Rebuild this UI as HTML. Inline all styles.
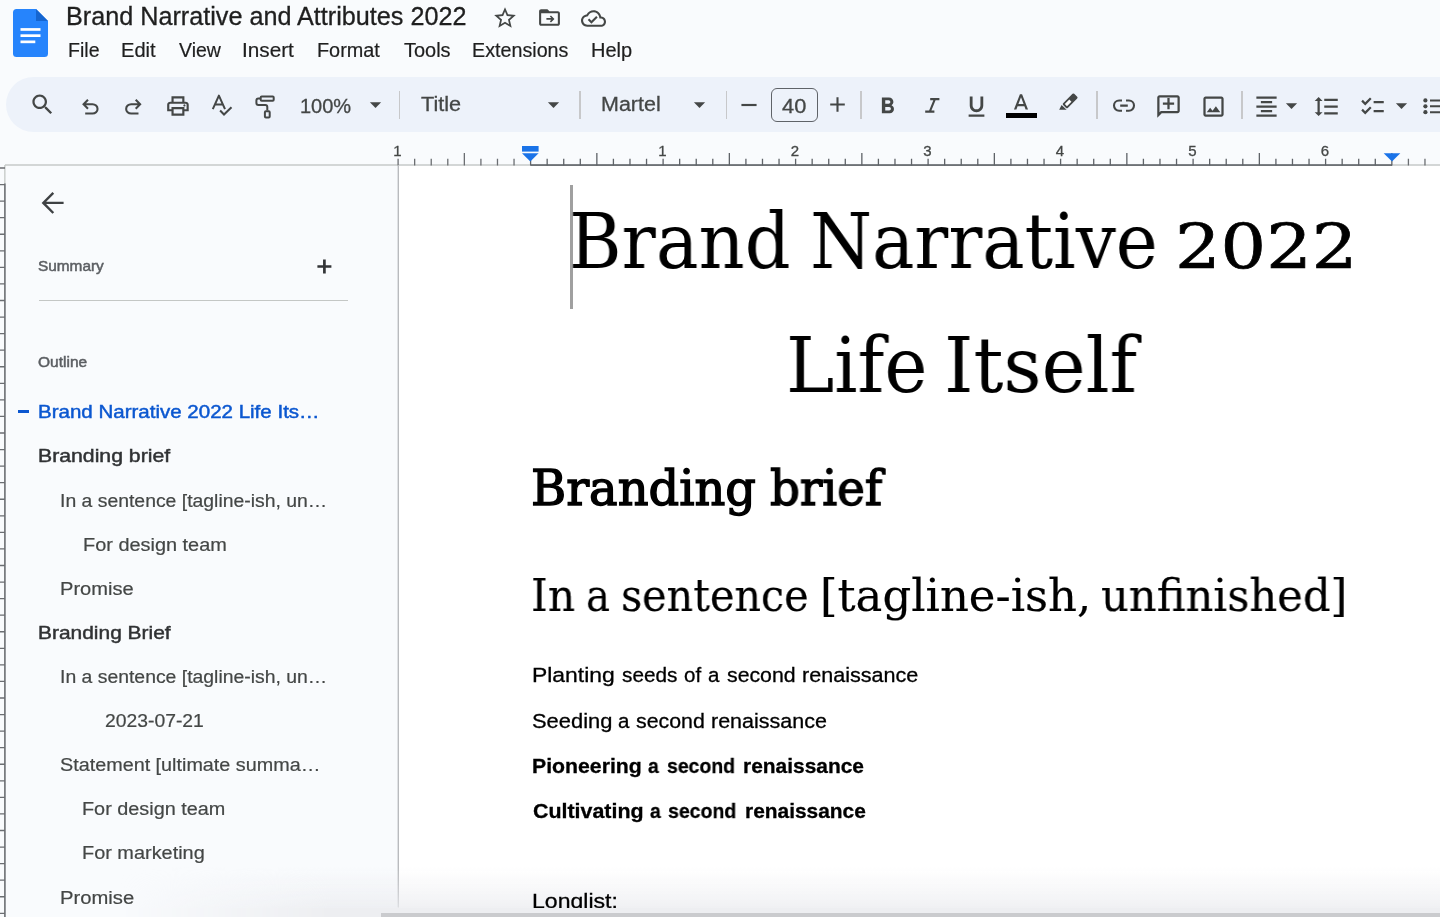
<!DOCTYPE html>
<html lang="en">
<head>
<meta charset="utf-8">
<title>Brand Narrative and Attributes 2022</title>
<style>
*{box-sizing:border-box;margin:0;padding:0}
html,body{width:1440px;height:917px;overflow:hidden;background:#f9fbfd}
body{position:relative;font-family:"Liberation Sans",sans-serif;color:#1f1f1f}
.abs{position:absolute}
.t{position:absolute;white-space:nowrap;line-height:1;transform-origin:0 100%;will-change:transform}
svg{position:absolute;overflow:visible}
.ic{fill:#444746}
/* header */
#doctitle{-webkit-text-stroke:.3px #1f1f1f;font-size:25px;color:#1f1f1f}
.menu{font-size:19.5px;color:#1f1f1f;-webkit-text-stroke:.2px #1f1f1f}
/* toolbar */
#toolbar{left:5.500px;top:76.800px;width:1500px;height:55.500px;border-radius:28px;background:#edf2fa}
.sep{position:absolute;top:91.200px;width:1.600px;height:27.400px;background:#c7c8ca}
.tb{font-size:20px;color:#444746;-webkit-text-stroke:.3px #444746}
/* sidebar */
.ol{font-size:18.3px;color:#444746;-webkit-text-stroke:.2px #444746}
.olb{font-size:17.8px;color:#303234;-webkit-text-stroke:.45px currentColor}
/* doc */
#page{left:399px;top:166px;width:1041px;height:751px;background:#fff}
.serif{font-family:"DejaVu Serif","Liberation Serif",serif;color:#000}
.tt{font-size:76px}
.h1{font-size:47.65px;-webkit-text-stroke:1.4px #000}
.h2{font-size:44px;-webkit-text-stroke:.2px #000}
.bb{font-weight:bold}
.body{font-size:20.5px;color:#000;-webkit-text-stroke:.3px #000}
</style>
</head>
<body>
<!-- HEADER -->
<svg class="abs" style="left:13px;top:9px" width="35" height="48" viewBox="0 0 35 48">
  <path d="M3.5 0H23L35 12V44.5Q35 48 31.500 48H3.500Q0 48 0 44.500V3.500Q0 0 3.500 0Z" fill="#2684fc"/>
  <path d="M23 0L35 12H23Z" fill="#1565d0"/>
  <rect x="7.500" y="19.100" width="20" height="2.700" fill="#fff"/>
  <rect x="7.500" y="25.300" width="20" height="2.700" fill="#fff"/>
  <rect x="7.500" y="31.500" width="14.800" height="2.700" fill="#fff"/>
</svg>
<div class="t" id="doctitle" style="left:66.0px;top:4.0px;transform:scaleX(1.0076)">Brand Narrative and Attributes 2022</div>
<div class="t menu" id="m1" style="left:68.0px;top:41.0px;transform:scaleX(1.0027)">File</div>
<div class="t menu" id="m2" style="left:121.0px;top:41.0px;transform:scaleX(1.0303)">Edit</div>
<div class="t menu" id="m3" style="left:179.0px;top:41.0px;transform:scaleX(1.0000)">View</div>
<div class="t menu" id="m4" style="left:242.0px;top:41.0px;transform:scaleX(1.0639)">Insert</div>
<div class="t menu" id="m5" style="left:317.0px;top:41.0px;transform:scaleX(1.0173)">Format</div>
<div class="t menu" id="m6" style="left:404.0px;top:41.0px;transform:scaleX(1.0231)">Tools</div>
<div class="t menu" id="m7" style="left:472.0px;top:41.0px;transform:scaleX(1.0107)">Extensions</div>
<div class="t menu" id="m8" style="left:591.0px;top:41.0px;transform:scaleX(1.0256)">Help</div>

<!-- HEADER ICONS -->
<svg class="ic" style="left:492.400px;top:4.600px" width="26" height="26" viewBox="0 0 24 24"><path d="M22 9.240l-7.190-.620L12 2 9.190 8.630 2 9.240l5.460 4.730L5.820 21 12 17.270 18.180 21l-1.630-7.030L22 9.240zM12 15.400l-3.760 2.270 1-4.280-3.320-2.880 4.380-.380L12 6.100l1.710 4.040 4.380.380-3.320 2.880 1 4.280L12 15.400z"/></svg>
<svg class="ic" style="left:537px;top:5.400px" width="25" height="25" viewBox="0 0 24 24"><path d="M20 6h-8l-2-2H4c-1.100 0-2 .900-2 2v12c0 1.100.900 2 2 2h16c1.100 0 2-.900 2-2V8c0-1.100-.900-2-2-2zm0 12H4V8h16v10z"/><path d="M13.200 17l-1.300-1.300 1.700-1.700H8v-2h5.600l-1.700-1.700L13.200 9l4 4z" transform="translate(12.9,13.4) scale(.84) translate(-12.6,-13)"/></svg>
<svg class="ic" style="left:581px;top:5.500px" width="25" height="25" viewBox="0 0 24 24"><path d="M19.350 10.040C18.670 6.590 15.640 4 12 4 9.110 4 6.600 5.640 5.350 8.040 2.340 8.360 0 10.910 0 14c0 3.310 2.690 6 6 6h13c2.760 0 5-2.240 5-5 0-2.640-2.050-4.780-4.650-4.960zM19 18H6c-2.210 0-4-1.790-4-4 0-2.050 1.530-3.760 3.560-3.970l1.070-.110.500-.950C8.080 7.140 9.940 6 12 6c2.620 0 4.880 1.860 5.390 4.430l.300 1.500 1.530.110c1.560.100 2.780 1.410 2.780 2.960 0 1.650-1.350 3-3 3zm-9-3.820l-2.090-2.090L6.500 13.500 10 17l6.010-6.010-1.410-1.410z"/></svg>
<!-- TOOLBAR -->
<div class="abs" id="toolbar"></div>
<div class="sep" style="left:398.700px"></div>
<div class="sep" style="left:579.200px"></div>
<div class="sep" style="left:725.700px"></div>
<div class="sep" style="left:860.200px"></div>
<div class="sep" style="left:1096.100px"></div>
<div class="sep" style="left:1241.200px"></div>
<!-- search -->
<svg class="ic" style="left:28.800px;top:90.900px" width="27" height="27" viewBox="0 0 24 24"><path d="M15.500 14h-.790l-.280-.270C15.410 12.590 16 11.110 16 9.500 16 5.910 13.090 3 9.500 3S3 5.910 3 9.500 5.910 16 9.500 16c1.610 0 3.090-.590 4.230-1.570l.270.280v.790l5 4.990L20.490 19l-4.990-5zm-6 0C7.010 14 5 11.990 5 9.500S7.010 5 9.500 5 14 7.010 14 9.500 11.990 14 9.500 14z"/></svg>
<!-- undo -->
<svg class="ic" style="left:77.800px;top:94.700px" width="24.700" height="24.700" viewBox="0 0 24 24"><path d="M7 19v-2h7.100q1.575 0 2.737-1Q18 15 18 13.500T16.837 11Q15.675 10 14.100 10H7.800l2.600 2.600L9 14 4 9l5-5 1.400 1.400L7.800 8h6.300q2.425 0 4.163 1.575Q20 11.150 20 13.500q0 2.350-1.737 3.925Q16.525 19 14.100 19Z"/></svg>
<!-- redo -->
<svg class="ic" style="left:120.900px;top:94.700px" width="24.700" height="24.700" viewBox="0 0 24 24"><path d="M9.900 19q-2.425 0-4.163-1.575Q4 15.850 4 13.500q0-2.350 1.737-3.925Q7.475 8 9.900 8h6.300l-2.600-2.600L15 4l5 5-5 5-1.400-1.400 2.600-2.600H9.900q-1.575 0-2.737 1Q6 12 6 13.500T7.163 16q1.162 1 2.737 1H17v2Z"/></svg>
<!-- print -->
<svg class="ic" style="left:165.100px;top:93.400px" width="25.900" height="25.900" viewBox="0 0 24 24"><path d="M16 8V5H8v3H6V3h12v5ZM4 10h16H6Zm14 2.500q.425 0 .713-.288Q19 11.925 19 11.500t-.287-.713Q18.425 10.500 18 10.500t-.712.287Q17 11.075 17 11.500t.288.712q.287.288.712.288ZM16 19v-4H8v4Zm2 2H6v-4H2v-6q0-1.275.875-2.138Q3.750 8 5 8h14q1.275 0 2.137.862Q22 9.725 22 11v6h-4Zm2-6v-4q0-.425-.288-.713Q19.425 10 19 10H5q-.425 0-.713.287Q4 10.575 4 11v4h2v-2h12v2Z"/></svg>
<!-- spellcheck -->
<!-- paint roller -->
<svg style="left:0;top:0" width="1440" height="140" viewBox="0 0 1440 140" fill="none" stroke="#444746" stroke-width="2" stroke-linejoin="miter">
<!-- spellcheck A + check -->
<path d="M212.800 109.200L218.900 95.600L225 109.200M214.900 104.400H222.900" stroke-linejoin="round"/>
<path d="M220.100 110.500L224 114.500L231.500 107.200"/>
<!-- paint roller -->
<rect x="260.700" y="96.500" width="13" height="4.200" rx="1"/>
<path d="M260 98.600H258.400Q256.400 98.600 256.400 100.600V103Q256.400 105 258.400 105H265.300Q267.300 105 267.300 107V110.500"/>
<rect x="264.900" y="111.200" width="4.800" height="6.400" rx="1"/>
<!-- italic, highlighter, link -->
<path d="M930.200 99.100H939.400M925.200 111.600H934.400M934.900 99.100L929.800 111.600" stroke-width="2.100"/>
<g transform="translate(1070.150,100.850) rotate(45)">
<rect x="-3.300" y="-7.850" width="6.600" height="15.700" rx="1.200" fill="#444746" stroke="none"/>
<rect x="-1.500" y="-.300" width="3" height="6.300" fill="#fff" stroke="none"/>
</g>
<path d="M1061.600 105L1066.600 109.700H1059.200Z" fill="#444746" stroke="none"/>
<path d="M1122 100.500H1119.100A5.100 5.100 0 0 0 1119.100 110.700H1122M1126 100.500H1128.900A5.100 5.100 0 0 1 1128.900 110.700H1126M1120.200 105.600H1127.800" stroke-width="2.100"/>
<!-- bullets -->
<path d="M1430 100.400H1446M1430 106.300H1446M1430 112.200H1446"/>
<circle cx="1425.400" cy="100.400" r="2.100" fill="#444746" stroke="none"/><circle cx="1425.400" cy="106.300" r="2.100" fill="#444746" stroke="none"/><circle cx="1425.400" cy="112.200" r="2.100" fill="#444746" stroke="none"/>
</svg>
<div class="t tb" id="zoom" style="left:300.0px;top:96.0px;transform:scaleX(1.0000)">100%</div>
<svg class="ic" style="left:362px;top:90.800px" width="27" height="27" viewBox="0 0 24 24"><path d="M7 10l5 5 5-5z"/></svg>
<div class="t tb" id="tstyle" style="left:421.0px;top:94.0px;transform:scaleX(1.0818)">Title</div>
<svg class="ic" style="left:540px;top:90.800px" width="27" height="27" viewBox="0 0 24 24"><path d="M7 10l5 5 5-5z"/></svg>
<div class="t tb" id="tfont" style="left:601.0px;top:94.0px;transform:scaleX(1.0741)">Martel</div>
<svg class="ic" style="left:686px;top:90.800px" width="27" height="27" viewBox="0 0 24 24"><path d="M7 10l5 5 5-5z"/></svg>
<!-- minus / size / plus -->
<svg class="ic" style="left:736px;top:92px" width="26" height="26" viewBox="0 0 24 24"><path d="M19 13H5v-2h14v2z"/></svg>
<div class="abs" style="left:770.500px;top:88px;width:47px;height:33.500px;border:1.400px solid #5f6368;border-radius:6px"></div>
<div class="t tb" id="tsize" style="left:782.0px;top:96.0px;transform:scaleX(1.0909)">40</div>
<svg class="ic" style="left:824.700px;top:92.300px" width="25" height="25" viewBox="0 0 24 24"><path d="M19 13h-6v6h-2v-6H5v-2h6V5h2v6h6v2z"/></svg>
<!-- B I U A pen -->
<svg class="ic" style="left:873.500px;top:92.800px" width="27" height="27" viewBox="0 0 24 24"><path d="M15.600 10.790c.970-.670 1.650-1.770 1.650-2.790 0-2.260-1.750-4-4-4H7v14h7.040c2.090 0 3.710-1.700 3.710-3.790 0-1.520-.860-2.820-2.150-3.420zM10 6.500h3c.830 0 1.500.670 1.500 1.500s-.670 1.500-1.500 1.500h-3v-3zm3.500 9H10v-3h3.500c.830 0 1.500.670 1.500 1.500s-.670 1.500-1.500 1.500z"/></svg>
<svg class="ic" style="left:962.500px;top:92.500px" width="27" height="27" viewBox="0 0 24 24"><path d="M12 17c3.310 0 6-2.690 6-6V3h-2.500v8c0 1.930-1.570 3.500-3.500 3.500S8.500 12.930 8.500 11V3H6v8c0 3.310 2.690 6 6 6zm-7 2v2h14v-2H5z"/></svg>
<svg class="ic" style="left:1008px;top:91px" width="26" height="26" viewBox="0 0 24 24"><path d="M11 3L5.500 17h2.250l1.120-3h6.250l1.120 3h2.250L13 3h-2zm-1.380 9L12 5.670 14.380 12H9.620z"/></svg>
<div class="abs" style="left:1006px;top:113px;width:31px;height:5px;background:#000"></div>
<!-- highlighter -->
<!-- link -->
<!-- add comment (tail left) -->
<svg class="ic" style="left:1154.500px;top:92.500px" width="27" height="27" viewBox="0 0 24 24"><g transform="translate(24,0) scale(-1,1)"><path d="M22 4c0-1.100-.900-2-2-2H4c-1.100 0-2 .900-2 2v12c0 1.100.900 2 2 2h14l4 4V4zm-2 13.170L18.830 16H4V4h16v13.170z"/></g><path d="M13 5h-2v4H7v2h4v4h2v-4h4V9h-4z" transform="translate(0,-.500)"/></svg>
<!-- image -->
<svg class="ic" style="left:1199.500px;top:92.500px" width="27" height="27" viewBox="0 0 24 24"><path d="M19 5v14H5V5h14m0-2H5c-1.100 0-2 .900-2 2v14c0 1.100.900 2 2 2h14c1.100 0 2-.900 2-2V5c0-1.100-.900-2-2-2zm-4.860 8.860l-3 3.870L9 13.140 6 17h12l-3.860-5.140z"/></svg>
<!-- align center -->
<svg class="ic" style="left:1252.500px;top:92.500px" width="27" height="27" viewBox="0 0 24 24"><path d="M7 15v2h10v-2H7zm-4 6h18v-2H3v2zm0-8h18v-2H3v2zm4-6v2h10V7H7zM3 3v2h18V3H3z"/></svg>
<svg class="ic" style="left:1278px;top:92px" width="27" height="27" viewBox="0 0 24 24"><path d="M7 10l5 5 5-5z"/></svg>
<!-- line spacing -->
<svg class="ic" style="left:1312.500px;top:92.500px" width="27" height="27" viewBox="0 0 24 24"><path d="M6 7h2.500L5 3.500 1.500 7H4v10H1.500L5 20.500 8.500 17H6V7zm4-2v2h12V5H10zm0 14h12v-2H10v2zm0-6h12v-2H10v2z"/></svg>
<!-- checklist -->
<svg class="ic" style="left:1358.500px;top:92.500px" width="27" height="27" viewBox="0 0 24 24"><path d="M22 7h-9v2h9V7zm0 8h-9v2h9v-2zM5.540 11L2 7.460l1.410-1.410 2.120 2.120 4.240-4.240 1.410 1.410L5.540 11zm0 8L2 15.460l1.410-1.410 2.120 2.120 4.240-4.240 1.410 1.410L5.540 19z"/></svg>
<svg class="ic" style="left:1388px;top:92px" width="27" height="27" viewBox="0 0 24 24"><path d="M7 10l5 5 5-5z"/></svg>
<!-- bullets -->
<!-- RULER -->
<svg style="left:0;top:0" width="1440" height="917" viewBox="0 0 1440 917">
<rect x="5" y="164.300" width="526" height="1.400" fill="#c4c7c5"/>
<rect x="530.600" y="164.200" width="861.400" height="1.700" fill="#5f6368"/>
<rect x="1392" y="164.300" width="48" height="1.400" fill="#c4c7c5"/>
<path d="M398.10 158.70V165.50M414.66 158.70V165.50M431.23 158.70V165.50M447.79 158.70V165.50M464.35 153.00V165.50M480.91 158.70V165.50M497.48 158.70V165.50M514.04 158.70V165.50M1408.41 158.70V165.50M1424.97 158.70V165.50" stroke="#6b6e72" stroke-width="1.300" fill="none"/>
<path d="M530.60 158.70V165.50M547.16 158.70V165.50M563.73 158.70V165.50M580.29 158.70V165.50M596.85 153.00V165.50M613.41 158.70V165.50M629.98 158.70V165.50M646.54 158.70V165.50M663.10 158.70V165.50M679.66 158.70V165.50M696.23 158.70V165.50M712.79 158.70V165.50M729.35 153.00V165.50M745.91 158.70V165.50M762.48 158.70V165.50M779.04 158.70V165.50M795.60 158.70V165.50M812.16 158.70V165.50M828.73 158.70V165.50M845.29 158.70V165.50M861.85 153.00V165.50M878.41 158.70V165.50M894.98 158.70V165.50M911.54 158.70V165.50M928.10 158.70V165.50M944.66 158.70V165.50M961.23 158.70V165.50M977.79 158.70V165.50M994.35 153.00V165.50M1010.91 158.70V165.50M1027.47 158.70V165.50M1044.04 158.70V165.50M1060.60 158.70V165.50M1077.16 158.70V165.50M1093.72 158.70V165.50M1110.29 158.70V165.50M1126.85 153.00V165.50M1143.41 158.70V165.50M1159.97 158.70V165.50M1176.54 158.70V165.50M1193.10 158.70V165.50M1209.66 158.70V165.50M1226.22 158.70V165.50M1242.79 158.70V165.50M1259.35 153.00V165.50M1275.91 158.70V165.50M1292.47 158.70V165.50M1309.04 158.70V165.50M1325.60 158.70V165.50M1342.16 158.70V165.50M1358.72 158.70V165.50M1375.29 158.70V165.50M1391.85 153.00V165.50" stroke="#5f6368" stroke-width="1.300" fill="none"/>
<text x="397.5" y="156.200" font-family="Liberation Sans, sans-serif" font-size="15" fill="#444746" stroke="#444746" stroke-width=".3" text-anchor="middle">1</text>
<text x="662.5" y="156.200" font-family="Liberation Sans, sans-serif" font-size="15" fill="#444746" stroke="#444746" stroke-width=".3" text-anchor="middle">1</text>
<text x="795.0" y="156.200" font-family="Liberation Sans, sans-serif" font-size="15" fill="#444746" stroke="#444746" stroke-width=".3" text-anchor="middle">2</text>
<text x="927.5" y="156.200" font-family="Liberation Sans, sans-serif" font-size="15" fill="#444746" stroke="#444746" stroke-width=".3" text-anchor="middle">3</text>
<text x="1060.0" y="156.200" font-family="Liberation Sans, sans-serif" font-size="15" fill="#444746" stroke="#444746" stroke-width=".3" text-anchor="middle">4</text>
<text x="1192.5" y="156.200" font-family="Liberation Sans, sans-serif" font-size="15" fill="#444746" stroke="#444746" stroke-width=".3" text-anchor="middle">5</text>
<text x="1325.0" y="156.200" font-family="Liberation Sans, sans-serif" font-size="15" fill="#444746" stroke="#444746" stroke-width=".3" text-anchor="middle">6</text>
<rect x="522" y="146" width="16.600" height="5.600" fill="#1a73e8"/>
<path d="M522 153.200h16.600l-8.300 8.300z" fill="#1a73e8"/>
<path d="M1383.700 153.200h16.600l-8.300 8.300z" fill="#1a73e8"/>
<rect x="397.600" y="165" width="1.400" height="742.500" fill="#b9bbbe"/>
<rect x="4.200" y="165" width="1.300" height="19" fill="#c4c7c5"/>
<rect x="4.100" y="183.500" width="1.600" height="734" fill="#6b6e72"/>
<path d="M0 168.00H5M0 184.56H5M0 201.12H5M0 217.69H5M0 234.25H5M0 250.81H5M0 267.38H5M0 283.94H5M0 300.50H5M0 317.06H5M0 333.62H5M0 350.19H5M0 366.75H5M0 383.31H5M0 399.88H5M0 416.44H5M0 433.00H5M0 449.56H5M0 466.12H5M0 482.69H5M0 499.25H5M0 515.81H5M0 532.38H5M0 548.94H5M0 565.50H5M0 582.06H5M0 598.62H5M0 615.19H5M0 631.75H5M0 648.31H5M0 664.88H5M0 681.44H5M0 698.00H5M0 714.56H5M0 731.12H5M0 747.69H5M0 764.25H5M0 780.81H5M0 797.38H5M0 813.94H5M0 830.50H5M0 847.06H5M0 863.62H5M0 880.19H5M0 896.75H5M0 913.31H5" stroke="#6b6e72" stroke-width="1.300" fill="none"/>
</svg>
<!-- PAGE BG + BOTTOM SHADOW (under text) -->
<div class="abs" id="page"></div>
<div class="abs" style="left:0;top:867px;width:1440px;height:41px;background:linear-gradient(to bottom,rgba(234,235,239,0) 0%,rgba(234,235,239,.2) 32%,rgba(234,235,239,.42) 64%,rgba(234,235,239,.62) 88%,rgba(234,235,239,.74) 100%);-webkit-mask-image:linear-gradient(to right,transparent 120px,#000 330px);mask-image:linear-gradient(to right,transparent 120px,#000 330px)"></div>
<!-- SIDEBAR -->
<svg style="left:0;top:0" width="100" height="230" viewBox="0 0 100 230"><path d="M63.600 202.900H44.500M53.300 192.800L43.300 202.900L53.300 213" stroke="#3f4244" stroke-width="2.400" fill="none"/></svg>
<div class="t" id="sb_sum" style="left:38.2px;top:258.0px;font-size:15.2px;-webkit-text-stroke:.5px currentColor;color:#5b5e62;transform:scaleX(1.0123)">Summary</div>
<svg style="left:0;top:0" width="400" height="300" viewBox="0 0 400 300"><path d="M317.400 266.500H331.400M324.400 259.500V273.500" stroke="#333537" stroke-width="2.700" fill="none"/></svg>
<div class="abs" style="left:39px;top:299.500px;width:309px;height:1.400px;background:#c4c7c5"></div>
<div class="t" id="sb_out" style="left:38.2px;top:353.5px;font-size:15.2px;-webkit-text-stroke:.5px currentColor;color:#5b5e62;transform:scaleX(1.0208)">Outline</div>
<div class="abs" style="left:18px;top:410px;width:11px;height:2.600px;background:#0b57d0"></div>
<div class="t olb" id="o1" style="left:38.0px;top:404.0px;color:#0b57d0;transform:scaleX(1.1535)">Brand Narrative 2022 Life Its…</div>
<div class="t olb" id="o2" style="left:38.0px;top:448.0px;transform:scaleX(1.1936)">Branding brief</div>
<div class="t ol" id="o3" style="left:60.0px;top:491.5px;transform:scaleX(1.0602)">In a sentence [tagline-ish, un…</div>
<div class="t ol" id="o4" style="left:82.5px;top:535.5px;transform:scaleX(1.0885)">For design team</div>
<div class="t ol" id="o5" style="left:60.0px;top:579.5px;transform:scaleX(1.0985)">Promise</div>
<div class="t olb" id="o6" style="left:38.0px;top:624.5px;transform:scaleX(1.1769)">Branding Brief</div>
<div class="t ol" id="o7" style="left:60.0px;top:668.0px;transform:scaleX(1.0602)">In a sentence [tagline-ish, un…</div>
<div class="t ol" id="o8" style="left:104.5px;top:712.0px;transform:scaleX(1.0565)">2023-07-21</div>
<div class="t ol" id="o9" style="left:60.0px;top:756.0px;transform:scaleX(1.0816)">Statement [ultimate summa…</div>
<div class="t ol" id="o10" style="left:82.0px;top:800.0px;transform:scaleX(1.0847)">For design team</div>
<div class="t ol" id="o11" style="left:82.0px;top:844.0px;transform:scaleX(1.0883)">For marketing</div>
<div class="t ol" id="o12" style="left:60.0px;top:889.0px;transform:scaleX(1.1061)">Promise</div>
<!-- DOC -->
<div class="abs" id="caret" style="left:570.400px;top:185px;width:2.500px;height:124px;background:#a0a0a0"></div>
<div class="t serif tt" id="t1a" style="left:569.0px;top:203.8px;transform:scaleX(0.9421)">Brand</div>
<div class="t serif tt" id="t1b" style="left:809.5px;top:203.8px;transform:scaleX(0.9336)">Narrative</div>
<div class="t serif tt" id="t1c" style="left:1175.0px;top:216.0px;font-family:'DejaVu Serif',serif;font-size:61px;-webkit-text-stroke:.7px #000;transform:scaleX(1.1750)">2022</div>
<div class="t serif tt" id="t2a" style="left:786.1px;top:328.0px;transform:scaleX(0.9553)">Life</div>
<div class="t serif tt" id="t2b" style="left:944.4px;top:328.0px;transform:scaleX(0.9807)">Itself</div>
<div class="t serif h1" id="h1a" style="left:530.6px;top:465.3px;transform:scaleX(1.0055)">Branding</div>
<div class="t serif h1" id="h1b" style="left:769.6px;top:465.3px;transform:scaleX(0.9804)">brief</div>
<div class="t serif h2" id="h2a" style="left:531.4px;top:574.2px;transform:scaleX(0.9637)">In</div>
<div class="t serif h2" id="h2b" style="left:586.0px;top:574.2px;transform:scaleX(0.9116)">a</div>
<div class="t serif h2" id="h2c" style="left:620.6px;top:574.2px;transform:scaleX(0.9391)">sentence</div>
<div class="t serif h2" id="h2d" style="left:820.0px;top:574.2px;transform:scaleX(1.0215)">[tagline-ish,</div>
<div class="t serif h2" id="h2e" style="left:1101.0px;top:574.2px;transform:scaleX(0.9827)">unfinished]</div>
<div class="t body" id="p1a" style="left:531.5px;top:664.7px;transform:scaleX(1.1176)">Planting</div>
<div class="t body" id="p1b" style="left:621.5px;top:664.7px;transform:scaleX(1.0124)">seeds</div>
<div class="t body" id="p1c" style="left:684.0px;top:664.7px;transform:scaleX(1.0004)">of</div>
<div class="t body" id="p1d" style="left:708.0px;top:664.7px;transform:scaleX(1.000)">a</div>
<div class="t body" id="p1e" style="left:726.5px;top:664.7px;transform:scaleX(1.0374)">second</div>
<div class="t body" id="p1f" style="left:801.5px;top:664.7px;transform:scaleX(1.0528)">renaissance</div>
<div class="t body" id="p2a" style="left:531.5px;top:710.5px;transform:scaleX(1.0685)">Seeding</div>
<div class="t body" id="p2b" style="left:617.8px;top:710.5px;transform:scaleX(1.000)">a</div>
<div class="t body" id="p2c" style="left:636.0px;top:710.5px;transform:scaleX(1.0410)">second</div>
<div class="t body" id="p2d" style="left:710.5px;top:710.5px;transform:scaleX(1.0486)">renaissance</div>
<div class="t body bb" id="p3a" style="left:531.5px;top:755.6px;transform:scaleX(1.0362)">Pioneering</div>
<div class="t body bb" id="p3b" style="left:648.4px;top:755.6px;transform:scaleX(0.940)">a</div>
<div class="t body bb" id="p3c" style="left:666.5px;top:755.6px;transform:scaleX(0.9471)">second</div>
<div class="t body bb" id="p3d" style="left:743.0px;top:755.6px;transform:scaleX(1.0205)">renaissance</div>
<div class="t body bb" id="p4a" style="left:532.5px;top:800.8px;transform:scaleX(1.0441)">Cultivating</div>
<div class="t body bb" id="p4b" style="left:650.1px;top:800.8px;transform:scaleX(0.940)">a</div>
<div class="t body bb" id="p4c" style="left:668.0px;top:800.8px;transform:scaleX(0.9504)">second</div>
<div class="t body bb" id="p4d" style="left:744.5px;top:800.8px;transform:scaleX(1.0195)">renaissance</div>
<div class="t body" id="d_p5" style="left:531.5px;top:891.3px;transform:scaleX(1.1240)">Longlist:</div>
<!-- BOTTOM -->
<div class="abs" style="left:0;top:907.500px;width:1440px;height:10px;background:#edeef1;-webkit-mask-image:linear-gradient(to right,transparent 120px,#000 330px);mask-image:linear-gradient(to right,transparent 120px,#000 330px)"></div>
<div class="abs" style="left:381px;top:913px;width:1059px;height:4px;background:#cacbce"></div>
</body>
</html>
